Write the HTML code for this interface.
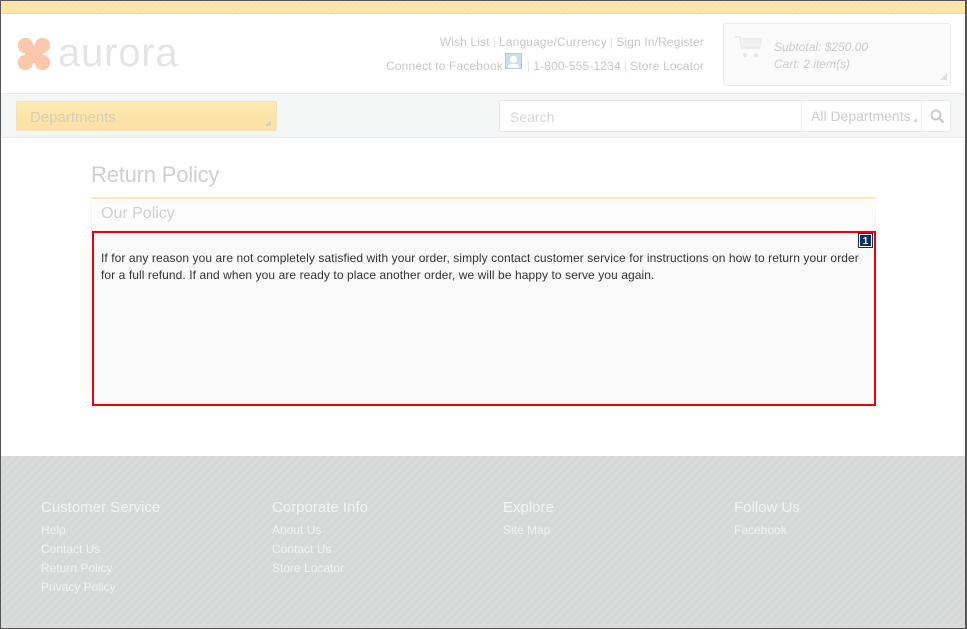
<!DOCTYPE html>
<html><head><meta charset="utf-8"><style>
*{margin:0;padding:0;box-sizing:border-box}
body{width:967px;height:629px;overflow:hidden;font-family:"Liberation Sans",sans-serif;background:#fff;position:relative}
.frame{position:absolute;inset:0;border:1px solid #555;border-right-width:2px;pointer-events:none;z-index:9}
.a{position:absolute;white-space:nowrap}
.top{left:0;top:0;width:967px;height:14px;background:repeating-linear-gradient(135deg,#fde6ad 0 2px,#fbe3a6 2px 4px);border-bottom:1px solid #f3dca0}
.logo{left:58px;top:31px;font-size:40px;color:#e4e4e4;letter-spacing:0.8px}
.ln{font-size:12px;color:#c8c8c8;letter-spacing:0.15px}
.ln i{font-style:normal;color:#e2e2e2;margin:0 3px}
.cart{left:723px;top:23px;width:228px;height:63px;border:1px solid #ececec;border-radius:3px;background:#fafafa}
.nav{left:0;top:93px;width:967px;height:45px;background:#f4f5f5;border-top:1px solid #ebebeb;border-bottom:1px solid #ebebeb}
.dep{left:16px;top:101px;width:261px;height:30px;background:linear-gradient(#fee9b3,#fde0a4);border:1px solid #efe2c0;border-radius:2px;font-size:15px;color:#d6cdb8;padding:7px 0 0 13px}
.srch{left:499px;top:100px;width:452px;height:32px;background:#fff;border:1px solid #e8e8e8;border-radius:3px}
.foot{left:0;top:456px;width:967px;height:173px;background:repeating-linear-gradient(135deg,#d6d7d7 0 3px,#d9dada 3px 6px)}
.fh{font-size:15px;color:#f4f4f4}
.fl{font-size:12px;color:#f2f2f2}
.dv{width:1px;height:104px;top:497px;background:#dadbdb}
</style></head><body>
<div class="a top"></div>
<svg class="a" style="left:18px;top:38px" width="32" height="32" viewBox="0 0 32 32"><g fill="#fbc8ab"><rect x="0" y="0" width="15" height="15" rx="7"/><rect x="17" y="0" width="15" height="15" rx="7"/><rect x="0" y="17" width="15" height="15" rx="7"/><rect x="17" y="17" width="15" height="15" rx="7"/><rect x="7" y="7" width="18" height="18"/></g></svg>
<div class="a logo">aurora</div>
<div class="a ln" style="right:263px;top:35px">Wish List<i>|</i>Language/Currency<i>|</i>Sign In/Register</div>
<div class="a ln" style="left:386px;top:59px">Connect to Facebook</div>
<div class="a" style="left:505px;top:53px;width:17px;height:16px;background:#cfdde8;border:1px solid #b8c8d6"><div style="width:7px;height:7px;border-radius:50%;background:#fff;margin:2px auto 0"></div><div style="width:11px;height:4px;background:#fff;margin:1px auto 0;border-radius:3px 3px 0 0"></div></div>
<div class="a ln" style="left:524px;top:59px"><i>|</i>1-800-555-1234<i>|</i>Store Locator</div>
<div class="a cart"></div>
<svg class="a" style="left:735px;top:36px" width="28" height="22" viewBox="0 0 28 22"><path d="M0 1h5l2 11h17l2-9H7" fill="none" stroke="#ececec" stroke-width="2"/><rect x="8" y="4" width="17" height="7" fill="#efefef"/><circle cx="10" cy="19" r="2" fill="#e8e8e8"/><circle cx="21" cy="19" r="2" fill="#e8e8e8"/></svg>
<div class="a" style="left:774px;top:40px;font-size:12px;color:#ccc;font-style:italic">Subtotal: $250.00</div>
<div class="a" style="left:774px;top:57px;font-size:12px;color:#ccc;font-style:italic">Cart: 2 item(s)</div>
<div class="a" style="left:940px;top:73px;width:0;height:0;border-left:7px solid transparent;border-bottom:7px solid #ddd"></div>
<div class="a nav"></div>
<div class="a dep">Departments</div>
<div class="a" style="left:265px;top:120px;width:0;height:0;border-left:6px solid transparent;border-bottom:6px solid #d8d0bd"></div>
<div class="a srch"></div>
<div class="a" style="left:510px;top:109px;font-size:14px;color:#d5d5d5">Search</div>
<div class="a" style="left:801px;top:101px;width:1px;height:30px;background:#eee"></div>
<div class="a" style="left:811px;top:108px;font-size:14px;color:#ccc">All Departments</div>
<div class="a" style="left:913px;top:118px;width:0;height:0;border-left:4px solid transparent;border-bottom:4px solid #dcd2bf"></div>
<div class="a" style="left:921px;top:101px;width:1px;height:30px;background:#eee"></div>
<svg class="a" style="left:930px;top:109px" width="15" height="15" viewBox="0 0 15 15"><circle cx="6" cy="6" r="4.5" fill="none" stroke="#c8c8c8" stroke-width="1.8"/><path d="M9.5 9.5l4 4" stroke="#c8c8c8" stroke-width="2"/></svg>
<div class="a" style="left:91px;top:162px;font-size:22px;color:#cfcfcf;letter-spacing:-0.2px">Return Policy</div>
<div class="a" style="left:91px;top:197px;width:785px;height:34px;border-top:2px solid #fde7b3;background:#fcfcfc;border-bottom:1px solid #f0f0f0;border-left:1px solid #f4f4f4;border-right:1px solid #f4f4f4"></div>
<div class="a" style="left:101px;top:205px;font-size:16px;color:#d0d0d0">Our Policy</div>
<div class="a" style="left:92px;top:231px;width:784px;height:175px;border:2px solid #e8000b;background:#f9f9f9"></div>
<div class="a" style="left:859px;top:234px;width:13px;height:13px;background:#0f3160;color:#fff;font-size:10px;font-weight:bold;text-align:center;line-height:13px;border:1px solid #fff;outline:1px solid #0f3160">1</div>
<div class="a" style="left:101px;top:250px;font-size:12px;color:#333;line-height:17px;white-space:normal;width:765px;letter-spacing:0.08px">If for any reason you are not completely satisfied with your order, simply contact customer service for instructions on how to return your order for a full refund. If and when you are ready to place another order, we will be happy to serve you again.</div>
<div class="a foot"></div>
<div class="a dv" style="left:251px"></div><div class="a dv" style="left:482px"></div><div class="a dv" style="left:713px"></div>
<div class="a fh" style="left:41px;top:499px">Customer Service</div>
<div class="a fl" style="left:41px;top:523px">Help</div>
<div class="a fl" style="left:41px;top:542px">Contact Us</div>
<div class="a fl" style="left:41px;top:561px">Return Policy</div>
<div class="a fl" style="left:41px;top:580px">Privacy Policy</div>
<div class="a fh" style="left:272px;top:499px">Corporate Info</div>
<div class="a fl" style="left:272px;top:523px">About Us</div>
<div class="a fl" style="left:272px;top:542px">Contact Us</div>
<div class="a fl" style="left:272px;top:561px">Store Locator</div>
<div class="a fh" style="left:503px;top:499px">Explore</div>
<div class="a fl" style="left:503px;top:523px">Site Map</div>
<div class="a fh" style="left:734px;top:499px">Follow Us</div>
<div class="a fl" style="left:734px;top:523px">Facebook</div>
<div class="frame"></div>
</body></html>
